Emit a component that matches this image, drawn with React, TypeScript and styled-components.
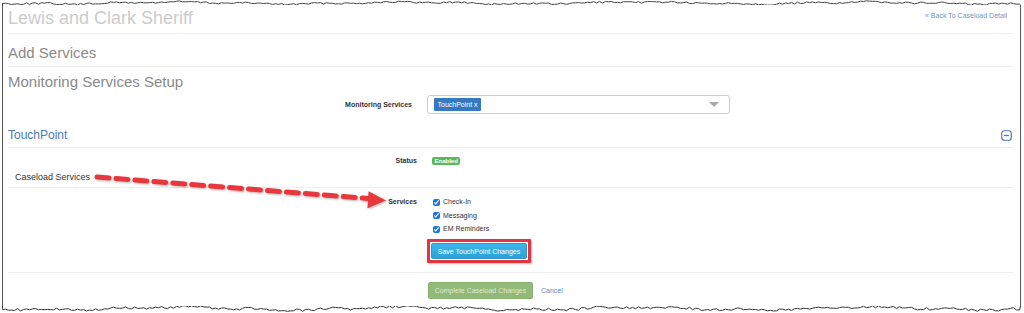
import React from "react";
import styled, { createGlobalStyle } from "styled-components";

const GlobalStyle = createGlobalStyle`
  html, body { margin: 0; padding: 0; background: #fff; }
  body { font-family: "Liberation Sans", Arial, sans-serif; }
`;

const Page = styled.div`
  width: 1024px;
  height: 313px;
  position: relative;
  overflow: hidden;
  background: #fff;
  display: flex;
  flex-direction: column;
`;

const Edge = styled.svg`
  display: block;
  flex: none;
`;

const Frame = styled.div`
  margin-left: 2px;
  width: 1019px;
  height: 301px;
  flex: none;
  box-sizing: border-box;
  border-left: 1px solid #555;
  border-right: 1px solid #555;
  padding: 0 7px 0 5px;
  display: flex;
  flex-direction: column;
`;

const Header = styled.div`
  display: flex;
  justify-content: space-between;
  align-items: center;
  padding: 3px 0 5px;
  border-bottom: 1px solid #eeeeee;
`;

const Title = styled.h1`
  margin: 0;
  font-size: 18px;
  line-height: 20px;
  font-weight: normal;
  color: #cccccc;
`;

const BackLink = styled.a`
  font-size: 7px;
  line-height: 10px;
  color: #6f97c8;
  text-decoration: none;
  margin: 0 6px 4px 0;
`;

const SectionTitle = styled.h2<{ $pt: number; $pb: number; $divider?: boolean }>`
  margin: 0;
  font-size: 15px;
  line-height: 18px;
  font-weight: normal;
  color: #8a8a8a;
  padding: ${(p) => p.$pt}px 0 ${(p) => p.$pb}px;
  border-bottom: ${(p) => (p.$divider ? "1px solid #eeeeee" : "none")};
`;

const FormRow = styled.div<{ $labelWidth: number; $align?: string; $pt?: number; $pb?: number; $mt?: number; $divider?: boolean }>`
  display: flex;
  align-items: ${(p) => p.$align || "center"};
  gap: 15px;
  margin-top: ${(p) => p.$mt || 0}px;
  padding: ${(p) => p.$pt || 0}px 0 ${(p) => p.$pb || 0}px;
  border-bottom: ${(p) => (p.$divider ? "1px solid #eeeeee" : "none")};
  & > label {
    width: ${(p) => p.$labelWidth}px;
  }
`;

const Label = styled.label`
  flex: none;
  text-align: right;
  font-size: 7px;
  line-height: 10px;
  font-weight: bold;
  color: #333;
`;

const Select = styled.div`
  width: 303px;
  height: 19px;
  box-sizing: border-box;
  border: 1px solid #cccccc;
  border-radius: 3px;
  display: flex;
  align-items: center;
  padding: 0 10px 0 6px;
`;

const Tag = styled.span`
  height: 13px;
  box-sizing: border-box;
  padding: 0 3.5px;
  background: #3579c1;
  color: #fff;
  font-size: 7px;
  line-height: 13px;
  border-radius: 1px;
`;

const Caret = styled.span`
  margin-left: auto;
  width: 0;
  height: 0;
  border-left: 5px solid transparent;
  border-right: 5px solid transparent;
  border-top: 5px solid #a8a8a8;
`;

const PanelHeading = styled.div`
  display: flex;
  justify-content: space-between;
  align-items: center;
  margin-top: 14px;
  padding-bottom: 5px;
  border-bottom: 1px solid #eeeeee;
`;

const PanelTitle = styled.h3`
  margin: 0;
  font-size: 12px;
  line-height: 14px;
  font-weight: normal;
  color: #4d7bb3;
`;

const CollapseIcon = styled.svg`
  display: block;
  margin-right: 1px;
`;

const Badge = styled.span`
  display: inline-block;
  height: 8px;
  padding: 0 2.5px;
  background: #5cb85c;
  color: #fff;
  font-size: 6px;
  line-height: 8px;
  font-weight: bold;
  border-radius: 2px;
`;

const CheckList = styled.div`
  display: flex;
  flex-direction: column;
  gap: 3.5px;
  align-items: flex-start;
`;

const CheckItem = styled.div`
  display: flex;
  align-items: center;
  gap: 3px;
  padding-left: 1px;
  font-size: 7px;
  line-height: 10px;
  color: #333;
  input {
    width: 7px;
    height: 7px;
    margin: 0;
    accent-color: #1a73e8;
  }
`;

const Highlight = styled.div`
  margin: 1.5px 0 0 -5px;
  padding: 1px;
  border: 3px solid #e2353f;
  border-radius: 1px;
  box-shadow: 1px 1px 2px rgba(0, 0, 0, 0.25);
`;

const Button = styled.button<{ $variant: "info" | "success" }>`
  display: block;
  height: ${(p) => (p.$variant === "info" ? 16 : 17)}px;
  width: ${(p) => (p.$variant === "info" ? 96 : 105)}px;
  box-sizing: border-box;
  padding: 0;
  font-family: "Liberation Sans", Arial, sans-serif;
  font-size: 7px;
  border-radius: 2px;
  cursor: pointer;
  color: ${(p) => (p.$variant === "info" ? "#ffffff" : "#dfe9d6")};
  background: ${(p) =>
    p.$variant === "info" ? "linear-gradient(#3db5ec, #2aa3dd)" : "#91b977"};
  border: 1px solid ${(p) => (p.$variant === "info" ? "#2b98cf" : "#88b06e")};
`;

const Footer = styled.div`
  display: flex;
  align-items: center;
  gap: 8px;
  padding: 9px 0 0 420px;
`;

const CancelLink = styled.a`
  font-size: 7px;
  color: #5b8cc4;
  text-decoration: none;
`;

const Overlay = styled.svg`
  position: absolute;
  left: 0;
  top: 0;
  pointer-events: none;
`;

const Annotation = styled.span`
  position: absolute;
  left: 15px;
  top: 172px;
  font-size: 9px;
  line-height: 10px;
  color: #333;
`;

function jagged(seed: number, x0: number, x1: number, base: number, amp: number): string {
  let s = seed;
  const rnd = () => {
    s = (s * 1103515245 + 12345) % 2147483648;
    return s / 2147483648;
  };
  const pts: string[] = [];
  for (let x = x0; x <= x1; x += 3) {
    const wave = Math.sin(x / 37) * amp * 0.5 + Math.sin(x / 11 + seed) * amp * 0.25;
    const y = base + wave + (rnd() - 0.5) * amp;
    pts.push(`${x.toFixed(1)},${y.toFixed(2)}`);
  }
  return "M" + pts.join(" L");
}

const topPath = jagged(7, 2.5, 1020.5, 3, 1.8);
const bottomPath = jagged(19, 2.5, 1020.5, 2.5, 2.6);

export default function App() {
  return (
    <Page>
      <GlobalStyle />
      <Edge width={1024} height={5} viewBox="0 0 1024 5">
        <path d={`M2.5,5 L2.5,3 ${topPath.replace("M", "L")} L1020.5,5`} fill="none" stroke="#444" strokeWidth={1} />
      </Edge>
      <Frame>
        <Header>
          <Title>Lewis and Clark Sheriff</Title>
          <BackLink href="#">« Back To Caseload Detail</BackLink>
        </Header>
        <SectionTitle $pt={10} $pb={4} $divider>
          Add Services
        </SectionTitle>
        <SectionTitle $pt={6} $pb={0}>
          Monitoring Services Setup
        </SectionTitle>
        <FormRow $labelWidth={404} $mt={4}>
          <Label>Monitoring Services</Label>
          <Select>
            <Tag>TouchPoint x</Tag>
            <Caret />
          </Select>
        </FormRow>
        <PanelHeading>
          <PanelTitle>TouchPoint</PanelTitle>
          <CollapseIcon width={11} height={11} viewBox="0 0 11 11">
            <rect x={0.75} y={0.75} width={9.5} height={9.5} rx={2.5} fill="none" stroke="#4d7bb3" strokeWidth={1.2} />
            <line x1={3} y1={5.5} x2={8} y2={5.5} stroke="#4d7bb3" strokeWidth={1.3} />
          </CollapseIcon>
        </PanelHeading>
        <FormRow $labelWidth={409} $pt={8} $pb={21} $divider>
          <Label>Status</Label>
          <Badge>Enabled</Badge>
        </FormRow>
        <FormRow $labelWidth={409} $align="flex-start" $pt={9} $pb={9} $divider>
          <Label>Services</Label>
          <CheckList>
            <CheckItem>
              <input type="checkbox" checked readOnly />
              Check-In
            </CheckItem>
            <CheckItem>
              <input type="checkbox" checked readOnly />
              Messaging
            </CheckItem>
            <CheckItem>
              <input type="checkbox" checked readOnly />
              EM Reminders
            </CheckItem>
            <Highlight>
              <Button $variant="info">Save TouchPoint Changes</Button>
            </Highlight>
          </CheckList>
        </FormRow>
        <Footer>
          <Button $variant="success">Complete Caseload Changes</Button>
          <CancelLink href="#">Cancel</CancelLink>
        </Footer>
      </Frame>
      <Edge width={1024} height={7} viewBox="0 0 1024 7">
        <path d={`M2.5,0 L2.5,2.5 ${bottomPath.replace("M", "L")} L1020.5,0`} fill="none" stroke="#333" strokeWidth={1} />
      </Edge>
      <Annotation>Caseload Services</Annotation>
      <Overlay width={1024} height={313} viewBox="0 0 1024 313">
        <defs>
          <filter id="sh" x="-10%" y="-50%" width="120%" height="200%">
            <feDropShadow dx="1" dy="1" stdDeviation="0.8" floodColor="#000" floodOpacity="0.3" />
          </filter>
        </defs>
        <g filter="url(#sh)">
          <line x1={97} y1={177} x2={368} y2={198.5} stroke="#e8373c" strokeWidth={5} strokeDasharray="12 7" strokeLinecap="round" />
          <polygon points="386,200.5 368.6,191.2 367.4,208.2" fill="#e8373c" />
        </g>
      </Overlay>
    </Page>
  );
}
